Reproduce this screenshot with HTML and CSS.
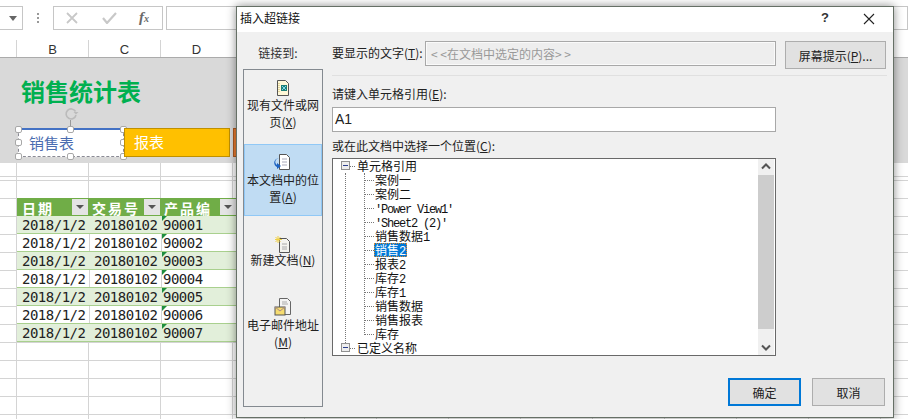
FILE: index.html
```html
<!DOCTYPE html>
<html lang="zh">
<head>
<meta charset="utf-8">
<title>插入超链接</title>
<link rel="stylesheet" href="styles.css">
</head>
<body>
<div class="sheet">
  <div class="fbar">
    <div class="namebox"><svg width="8" height="5" viewBox="0 0 8 5"><path d="M0 0h8L4 5z" fill="#666"/></svg></div>
    <div class="grip"><i></i><i></i><i></i></div>
    <div class="fbtns">
      <svg class="fb" width="12" height="12" viewBox="0 0 12 12"><path d="M1 1l10 10M11 1L1 11" stroke="#c8c8c8" stroke-width="1.8" fill="none"/></svg>
      <svg class="fb" width="15" height="12" viewBox="0 0 15 12"><path d="M1 6l4 5 9-10" stroke="#c8c8c8" stroke-width="2.2" fill="none"/></svg>
      <span class="fx">f<span class="fxs">x</span></span>
    </div>
    <div class="finput"></div>
  </div>
  <div class="colhead">
    <span class="ch">B</span><span class="ch">C</span><span class="ch">D</span>
  </div>
  <div class="band">
    <h1 class="title">销售统计表</h1>
    <div class="shapes">
      <div class="shape selected">销售表
        <svg class="rot" width="16" height="21" viewBox="0 0 16 21"><path d="M12.500 4.500A5 5 0 1 0 13 8" stroke="#bbb" stroke-width="1.600" fill="none"/><path d="M10.500 5h5l-2.500 2.500z" fill="#bbb"/><path d="M7.500 13v8" stroke="#999"/></svg>
        <i class="hd h-tl"></i><i class="hd h-tc"></i><i class="hd h-tr"></i><i class="hd h-ml"></i><i class="hd h-mr"></i><i class="hd h-bl"></i><i class="hd h-bc"></i><i class="hd h-br"></i>
      </div>
      <div class="shape yellow">报表</div>
      <div class="shape orange"></div>
    </div>
  </div>
  <div class="cells">
    <div class="thead">
      <div class="th"><span>日期</span><b class="fbtn"></b></div>
      <div class="th"><span>交易号</span><b class="fbtn"></b></div>
      <div class="th"><span>产品编</span><b class="fbtn"></b></div>
    </div>
    <div class="row odd"><span>2018/1/2</span><span>20180102</span><span class="flag">90001</span></div>
    <div class="row"><span>2018/1/2</span><span>20180102</span><span class="flag">90002</span></div>
    <div class="row odd"><span>2018/1/2</span><span>20180102</span><span class="flag">90003</span></div>
    <div class="row"><span>2018/1/2</span><span>20180102</span><span class="flag">90004</span></div>
    <div class="row odd"><span>2018/1/2</span><span>20180102</span><span class="flag">90005</span></div>
    <div class="row"><span>2018/1/2</span><span>20180102</span><span class="flag">90006</span></div>
    <div class="row odd"><span>2018/1/2</span><span>20180102</span><span class="flag">90007</span></div>
  </div>
</div>

<section class="dialog">
  <header class="dtitle">
    <span class="dname">插入超链接</span>
    <span class="help">?</span>
    <svg class="close" width="12" height="12" viewBox="0 0 12 12"><path d="M1 1l10 10M11 1L1 11" stroke="#222" stroke-width="1.100" fill="none"/></svg>
  </header>
  <div class="dbody">
    <aside class="side">
      <div class="linkto">链接到:</div>
      <nav class="panel">
        <div class="pitem p1">
          <svg class="pic" width="18" height="18" viewBox="0 0 18 18"><path d="M3.500 1.500h8l3 3v12h-11z" fill="#fff8d8" stroke="#555"/><path d="M5 4v10" stroke="#c9b560" stroke-dasharray="1 1"/><rect x="7" y="6" width="6" height="6" fill="#1c7f78"/><path d="M8 7l4 4M12 7l-4 4" stroke="#7fd8e8"/></svg>
          <span>现有文件或网页(<u>X</u>)</span>
        </div>
        <div class="pitem p2 active">
          <svg class="pic" width="18" height="18" viewBox="0 0 18 18"><path d="M5.500 1.500h7l3 3v12h-10z" fill="#fff" stroke="#555"/><path d="M8 6h5M8 9h5M8 12h5" stroke="#aab"/><path d="M5 5C1 6 0 10 3 12V10l4 3-4 3v-2C-1 12-1 6 5 5z" fill="#1c62c0"/></svg>
          <span>本文档中的位置(<u>A</u>)</span>
        </div>
        <div class="pitem p3">
          <svg class="pic" width="18" height="18" viewBox="0 0 18 18"><path d="M5.500 2.500h7l3 3v11h-10z" fill="#f4f4ee" stroke="#555"/><path d="M8 8h5M8 11h5M8 13h5" stroke="#aaa"/><path d="M4 0v7M1 3.500h7M1.500 1l5 5M6.500 1l-5 5" stroke="#f0d040"/></svg>
          <span>新建文档(<u>N</u>)</span>
        </div>
        <div class="pitem p4">
          <svg class="pic" width="18" height="18" viewBox="0 0 18 18"><path d="M5.500 .5h8l3 3v13h-11z" fill="#f4f4f4" stroke="#666"/><path d="M8 4h5M8 6h6" stroke="#aaa"/><rect x="1" y="9" width="10" height="8" fill="#f6dc70" stroke="#555"/><path d="M1 9l5 4 5-4" stroke="#a88" fill="none"/></svg>
          <span>电子邮件地址(<u>M</u>)</span>
        </div>
      </nav>
    </aside>
    <main class="main">
      <div class="row1">
        <label class="lbl1">要显示的文字(<u>T</u>):</label>
        <div class="dis">&lt; &lt;在文档中选定的内容&gt; &gt;</div>
        <button class="btn tip">屏幕提示(<u>P</u>)...</button>
      </div>
      <div class="sep"></div>
      <label class="lbl lbl-e">请键入单元格引用(<u>E</u>):</label>
      <div class="ref">A1</div>
      <label class="lbl lbl-c">或在此文档中选择一个位置(<u>C</u>):</label>
      <div class="tree">
        <div class="tlist">
          <div class="node root"><i class="exp"></i>单元格引用</div>
          <div class="node child">案例一</div>
          <div class="node child">案例二</div>
          <div class="node child"><span class="lat">'Power View1'</span></div>
          <div class="node child"><span class="lat">'Sheet2 (2)'</span></div>
          <div class="node child">销售数据<span class="lat">1</span></div>
          <div class="node child"><span class="sel">销售<span class="lat">2</span></span></div>
          <div class="node child">报表<span class="lat">2</span></div>
          <div class="node child">库存<span class="lat">2</span></div>
          <div class="node child">库存<span class="lat">1</span></div>
          <div class="node child">销售数据</div>
          <div class="node child">销售报表</div>
          <div class="node child">库存</div>
          <div class="node root"><i class="exp"></i>已定义名称</div>
        </div>
        <div class="sbar">
          <svg width="16" height="16" viewBox="0 0 16 16"><path d="M4 9.500l4-4 4 4" stroke="#555" stroke-width="2" fill="none"/></svg>
          <div class="thumb"></div>
          <svg width="16" height="16" viewBox="0 0 16 16"><path d="M4 6.500l4 4 4-4" stroke="#555" stroke-width="2" fill="none"/></svg>
        </div>
      </div>
      <div class="actions">
        <button class="btn ok">确定</button>
        <button class="btn cancel">取消</button>
      </div>
    </main>
  </div>
</section>
</body>
</html>
```
FILE: styles.css
```css
* { box-sizing: border-box; }
html, body { margin: 0; padding: 0; }
body {
  width: 908px; height: 419px; overflow: hidden; position: relative; background: #fff;
  font-family: "Noto Sans CJK SC", sans-serif; font-size: 12px; color: #222;
}
u { text-decoration: underline; }

/* sheet */
.sheet { width: 908px; height: 419px; display: flex; flex-direction: column; }
.fbar { height: 40px; padding-top: 6px; display: flex; align-items: flex-start; }
.namebox { width: 23px; height: 24px; border: 1px solid #c6c6c6; border-left: 0; display: flex; align-items: center; justify-content: flex-end; padding-right: 5px; }
.grip { width: 30px; height: 24px; display: flex; flex-direction: column; gap: 2px; align-items: center; justify-content: center; }
.grip i { width: 2px; height: 2px; background: #999; }
.fbtns { width: 110px; height: 24px; border: 1px solid #c6c6c6; display: flex; align-items: center; padding-left: 12px; }
.fb + .fb { margin-left: 24px; }
.fx { margin-left: 22px; font: italic 700 15px/20px "Liberation Serif", serif; color: #6a6a6a; }
.fxs { font-size: 10px; }
.finput { margin-left: 3px; flex: 1; height: 24px; border: 1px solid #c6c6c6; }
.colhead { height: 18px; padding-left: 16px; display: flex; border-bottom: 1px solid #ababab; background: #fff; }
.ch { width: 72px; border-left: 1px solid #d4d4d4; text-align: center; font: 13px/20px "Liberation Sans", sans-serif; color: #333; }
.band { height: 105px; background: #d9d9d9; padding: 15px 0 0 18px; }
.title { margin: 0 0 0 3px; font: 700 24px/36px "Noto Sans CJK SC", sans-serif; color: #00b050; }
.shapes { display: flex; margin-top: 19px; height: 29px; }
.shape { height: 29px; font-size: 15px; line-height: 25px; position: relative; }
.selected { width: 106px; background: #fff; color: #4a6cb0; padding-left: 10px; border: 1px dashed #8a8a94; border-top: 2px solid #4472c4; }
.yellow { width: 106px; background: #ffc000; color: #fff; border: 1px solid #bf9000; padding-left: 9px; margin-right: 3px; }
.orange { width: 20px; background: #ed7d31; border: 1px solid #ae5a21; }
.rot { position: absolute; left: 44px; top: -23px; }
.hd { position: absolute; width: 7px; height: 7px; border-radius: 2px; background: #fff; border: 1px solid #a8a8a8; }
.h-tl { left: -4px; top: -4px; } .h-tc { left: 48px; top: -4px; } .h-tr { right: -4px; top: -4px; }
.h-ml { left: -4px; top: 9px; } .h-mr { right: -4px; top: 9px; }
.h-bl { left: -4px; bottom: -4px; } .h-bc { left: 48px; bottom: -4px; } .h-br { right: -4px; bottom: -4px; }
.cells {
  flex: 1; padding: 35px 0 0 17px;
  background:
    repeating-linear-gradient(90deg, #d4d4d4 0 1px, transparent 1px 72px) 16px 0,
    repeating-linear-gradient(180deg, #d4d4d4 0 1px, transparent 1px 18px) 0 17px;
}
.thead, .row { width: 220px; display: grid; grid-template-columns: 72px 72px 76px; height: 18px; }
.thead { background: #70ad47; }
.th { display: flex; justify-content: space-between; padding: 1px 1px 0 5px; height: 18px; color: #fff; font-weight: 700; font-size: 14px; line-height: 18px; letter-spacing: 2px; white-space: nowrap; }
.th span { padding-top: 0; }
.th:nth-child(2) { padding-left: 3px; }
.th:nth-child(3) { padding-left: 3px; }
.fbtn { flex: none; width: 16px; height: 16px; background: #e4e4e4; position: relative; }
.fbtn::after { content: ""; position: absolute; left: 4px; top: 6px; border: 4px solid transparent; border-top: 4px solid #555; border-bottom: 0; }
.row { background: #fff; border-bottom: 1px solid #a9d08e; font: 14px/18px "DejaVu Sans Mono", monospace; letter-spacing: -.5px; color: #222; }
.row.odd { background: #e2efda; }
.row span { padding: 1px 0 0 4px; border-left: 1px solid #d4d4d4; white-space: nowrap; position: relative; height: 17px; line-height: 17px; }
.row.odd span { border-left-color: transparent; }
.row span:first-child { border-left-color: transparent; }
.row .flag { padding-left: 1px; }
.flag::before { content: ""; position: absolute; left: 0; top: 0; border-top: 5px solid #1e8e3e; border-right: 5px solid transparent; }

/* dialog */
.dialog {
  position: absolute; left: 236px; top: 6px; width: 658px; height: 412px;
  background: #f0f0f0; border: 1px solid #667066; box-shadow: 0 0 9px rgba(0,0,0,.45);
  display: flex; flex-direction: column;
}
.dtitle { height: 25px; background: #fff; display: flex; align-items: center; padding: 0 0 0 3px; font-size: 12px; color: #111; flex: none; }
.dname { flex: 1; margin-top: -4px; }
.help { font: 700 13px "Liberation Sans", sans-serif; margin: -4px 34px 0 0; color: #333; }
.close { margin: -2px 18px 0 0; }
.dbody { flex: 1; display: flex; padding-left: 6px; }
.side { width: 80px; flex: none; }
.linkto { height: 37px; padding: 13px 10px 0 0; text-align: center; line-height: 16px; color: #333; }
.panel { width: 80px; height: 338px; border: 1px solid #848a90; display: flex; flex-direction: column; background: #f0f0f0; }
.pitem { display: flex; flex-direction: column; align-items: center; text-align: center; line-height: 17px; color: #222; }
.pitem span { width: 74px; }
.pic { flex: none; }
.p1 { height: 74px; padding-top: 9px; }
.p1 .pic { margin-bottom: -1px; }
.p2 { height: 72px; padding-top: 9px; }
.active { background: #c0dcf3; outline: 1px solid #90c8f6; outline-offset: -1px; }
.p3 { height: 75px; padding-top: 20px; }
.p3 .pic { margin-bottom: -3px; }
.p4 { flex: 1; padding-top: 7px; }
.main { margin-left: 9px; width: 555px; display: flex; flex-direction: column; padding-top: 9px; }
.row1 { display: flex; height: 28px; align-items: flex-start; }
.lbl1 { width: 93px; line-height: 24px; color: #222; white-space: nowrap; }
.dis { width: 351px; height: 25px; border: 1px solid #a8a8a8; box-shadow: inset 0 0 0 1px #fafafa; background: #eeeeee; color: #999; padding-left: 5px; line-height: 23px; }
.btn { font: 12px "Noto Sans CJK SC", sans-serif; color: #222; background: #e1e1e1; border: 1px solid #adadad; padding: 0; }
.tip { margin-left: 9px; width: 101px; height: 28px; }
.sep { height: 1px; background: #e0e0e0; margin-top: 6px; }
.lbl { display: block; line-height: 16px; color: #222; }
.lbl-e { margin-top: 10px; }
.ref { margin-top: 5px; width: 444px; height: 25px; background: #fff; border: 1px solid #a8a8a8; padding-left: 2px; font: 14px/23px "Liberation Sans", sans-serif; color: #222; }
.lbl-c { margin-top: 6px; }
.tree { margin-top: 4px; width: 444px; height: 198px; background: #fff; border: 1px solid #696969; display: flex; padding-right: 1px; }
.tlist { flex: 1; position: relative; }
.tlist::before { content: ""; position: absolute; left: 12px; top: 14px; height: 176px; border-left: 1px dotted #777; }
.tlist::after { content: ""; position: absolute; left: 31px; top: 14px; height: 162px; border-left: 1px dotted #777; }
.node { height: 14px; line-height: 14px; position: relative; white-space: nowrap; color: #111; }
.root { padding-left: 24px; }
.child { padding-left: 42px; }
.child::before { content: ""; position: absolute; left: 32px; top: 7px; width: 9px; border-top: 1px dotted #777; }
.root::before { content: ""; position: absolute; left: 16px; top: 7px; width: 6px; border-top: 1px dotted #777; }
.exp { position: absolute; z-index: 1; left: 8px; top: 2px; width: 9px; height: 9px; border: 1px solid #919191; background: linear-gradient(#2c3f8c,#2c3f8c) center/5px 1px no-repeat, #eee; }
.lat { font: 12px/14px "Liberation Mono", monospace; letter-spacing: -1.2px; }
.sel { display: inline-block; margin-left: -1px; padding: 0 2px 0 1px; height: 14px; background: #0078d7; color: #fff; outline: 1px dotted #e08a30; outline-offset: -1px; }
.sbar { width: 16px; flex: none; background: #f0f0f0; display: flex; flex-direction: column; }
.sbar svg { flex: none; }
.thumb { height: 154px; background: #cdcdcd; }
.sbar svg:last-child { margin-top: auto; }
.actions { display: flex; margin-top: 22px; gap: 11px; padding-left: 396px; }
.ok, .cancel { width: 73px; height: 28px; }
.ok { border: 2px solid #0078d7; }
```
